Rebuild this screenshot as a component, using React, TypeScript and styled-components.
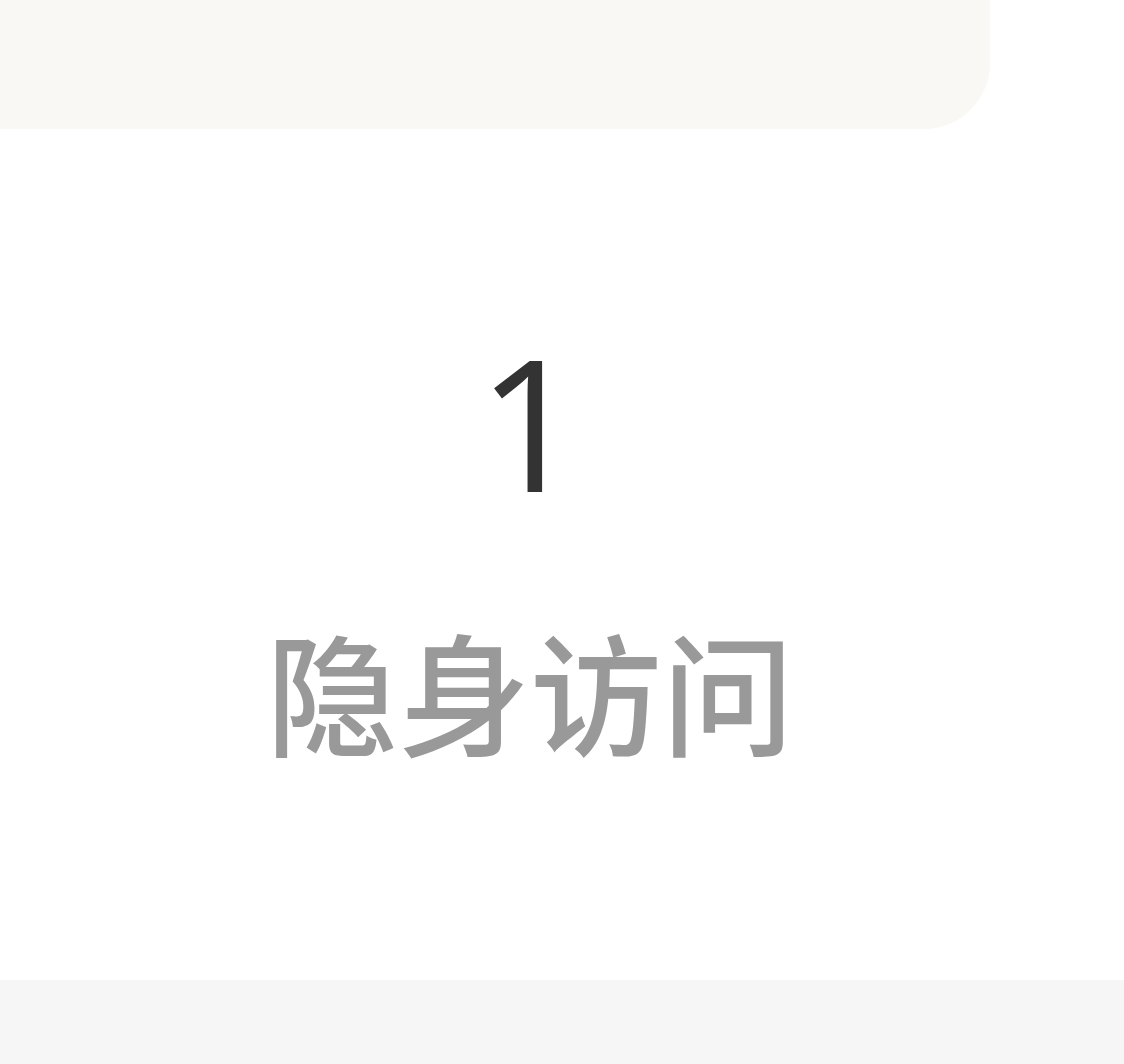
import React from "react";
import styled, { createGlobalStyle } from "styled-components";

const Global = createGlobalStyle`
  html, body { margin: 0; padding: 0; background: #ffffff; }
  body { font-family: "Noto Sans", "Noto Sans CJK SC", sans-serif; }
`;

const Page = styled.div`
  width: 1124px;
  height: 1064px;
  display: flex;
  flex-direction: column;
  background: #ffffff;
  overflow: hidden;
`;

const TopPanel = styled.div`
  width: 990px;
  height: 129px;
  flex: none;
  background: #f9f8f4;
  border-bottom-right-radius: 66px;
`;

const StatArea = styled.div`
  flex: 1;
  display: flex;
`;

const StatCell = styled.div`
  width: 1060px;
  display: flex;
  flex-direction: column;
  align-items: center;
  padding-top: 172px;
`;

const StatValue = styled.div`
  font-family: "Open Sans", Roboto, sans-serif;
  font-size: 184px;
  font-weight: 500;
  line-height: 240px;
  color: #333333;
`;

const StatLabel = styled.div`
  font-family: "Noto Sans CJK SC", sans-serif;
  font-size: 132px;
  font-weight: 500;
  line-height: 180px;
  color: #999999;
  margin-top: 58px;
`;

const BottomBar = styled.div`
  height: 84px;
  flex: none;
  background: #f6f6f6;
`;

export default function App() {
  return (
    <Page>
      <Global />
      <TopPanel />
      <StatArea>
        <StatCell>
          <StatValue>1</StatValue>
          <StatLabel>隐身访问</StatLabel>
        </StatCell>
      </StatArea>
      <BottomBar />
    </Page>
  );
}
